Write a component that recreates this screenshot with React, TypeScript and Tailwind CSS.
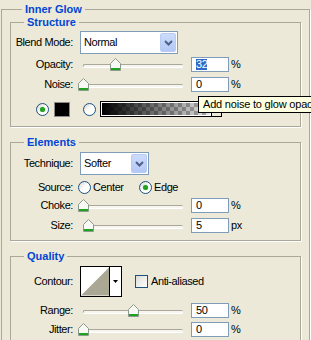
import React from "react";

// etched XP-style group box
const Group = ({ title, className, children }: { title: string; className?: string; children: React.ReactNode }) => (
  <fieldset
    className={`border border-[#aca899] shadow-[1px_1px_0_#fff] ${className ?? ""}`}
  >
    <legend className="ml-[13px] px-[3px] leading-[14px] font-bold text-[#0046d5] tracking-normal">
      {title}
    </legend>
    {children}
  </fieldset>
);

const Label = ({ children }: { children: React.ReactNode }) => (
  <span className="w-[62px] text-right whitespace-nowrap">{children}</span>
);

const Slider = ({ value }: { value: number }) => (
  <div className="relative w-[106px] h-[15px]">
    <div className="absolute left-[3px] top-[7px] w-[100px] h-[3px] rounded-full border-t border-l border-[#aca899] bg-[#f6f5f0] shadow-[0_1px_0_#fff]" />
    <svg
      className="absolute top-[1px]"
      style={{ left: 3 + value - 5 }}
      width="11"
      height="13"
      viewBox="0 0 11 13"
    >
      <path d="M0.5 5.5 L5.5 0.5 L10.5 5.5 V12.5 H0.5 Z" fill="#f8f8f5" stroke="#8a9a8c" />
      <rect x="1" y="10" width="9" height="2" fill="#21a121" />
    </svg>
  </div>
);

const NumInput = ({ value, selected }: { value: string; selected?: boolean }) => (
  <div className="ml-[5px] w-[38px] h-[15px] border border-[#7f9db9] bg-white flex items-center pl-[4px]">
    {selected ? <span className="bg-[#316ac5] text-white leading-[11px]">{value}</span> : value}
  </div>
);

const SliderRow = ({
  label,
  value,
  text,
  unit,
  selected,
  className,
}: {
  label: string;
  value: number;
  text: string;
  unit: string;
  selected?: boolean;
  className?: string;
}) => (
  <div className={`flex items-center h-[15px] ${className ?? ""}`}>
    <Label>{label}</Label>
    <div className="ml-[7px]">
      <Slider value={value} />
    </div>
    <NumInput value={text} selected={selected} />
    <span className="ml-[2px]">{unit}</span>
  </div>
);

const Radio = ({ checked, className }: { checked?: boolean; className?: string }) => (
  <div
    className={`w-[13px] h-[13px] rounded-full border border-[#1c5180] bg-gradient-to-br from-[#d6d5ce] via-white to-white flex items-center justify-center shrink-0 ${className ?? ""}`}
  >
    {checked && <div className="w-[5px] h-[5px] rounded-full bg-[#21a121] shadow-[0_0_1px_#5fd35f]" />}
  </div>
);

const Dropdown = ({ text, width }: { text: string; width: string }) => (
  <div className={`ml-[7px] ${width} h-[23px] border border-[#7f9db9] bg-white flex items-center`}>
    <span className="flex-1 pl-[3px]">{text}</span>
    <div className="w-[16px] h-[19px] mr-[1px] rounded-[2px] border border-[#b9cbf5] bg-gradient-to-b from-[#cddcfc] to-[#b4c8f6] flex items-center justify-center">
      <svg width="9" height="6" viewBox="0 0 9 6">
        <path d="M1 1 L4.5 4.5 L8 1" fill="none" stroke="#4d6185" strokeWidth="2" />
      </svg>
    </div>
  </div>
);

export default function App() {
  return (
    <div className="relative w-[311px] h-[340px] overflow-hidden bg-[#ece9d8] text-black text-[11px] leading-[13px] tracking-[-0.4px] font-['Liberation_Sans',Arial,sans-serif]">
      <fieldset className="ml-[1px] mt-[3px] w-[309px] pl-[8px] border border-[#aca899] shadow-[1px_1px_0_#fff]">
        <legend className="ml-[12px] px-[3px] leading-[12px] font-bold text-[#0046d5] tracking-normal">
          Inner Glow
        </legend>

        <Group title="Structure" className="w-[291px] pb-[9px]">
          <div className="flex items-center h-[23px] mt-[2px]">
            <Label>Blend Mode:</Label>
            <Dropdown text="Normal" width="w-[98px]" />
          </div>
          <SliderRow label="Opacity:" value={32} text="32" unit="%" selected className="mt-[3px]" />
          <SliderRow label="Noise:" value={0} text="0" unit="%" className="mt-[5px]" />
          <div className="flex items-center h-[16px] mt-[9px]">
            <Radio checked className="ml-[25px]" />
            <div className="ml-[5px] w-[16px] h-[15px] border border-[#8c8c8c] bg-black" />
            <Radio className="ml-[13px]" />
            <div className="ml-[4px] w-[112px] h-[16px] border border-black bg-white p-[1px]">
              <div className="w-full h-full bg-[conic-gradient(#a9a9a9_25%,#e6e6e6_0_50%,#a9a9a9_0_75%,#e6e6e6_0)] bg-[length:8px_8px]">
                <div className="w-full h-full bg-gradient-to-r from-black to-transparent" />
              </div>
            </div>
            <div className="w-[10px] h-[16px] border border-l-0 border-black bg-[#ece9d8]" />
          </div>
        </Group>

        <Group title="Elements" className="w-[291px] mt-[8px] pb-[7px]">
          <div className="flex items-center h-[23px] mt-[3px]">
            <Label>Technique:</Label>
            <Dropdown text="Softer" width="w-[69px]" />
          </div>
          <div className="flex items-center h-[13px] mt-[6px]">
            <Label>Source:</Label>
            <Radio className="ml-[5px]" />
            <span className="ml-[2px] w-[46px]">Center</span>
            <Radio checked />
            <span className="ml-[2px]">Edge</span>
          </div>
          <SliderRow label="Choke:" value={0} text="0" unit="%" className="mt-[4px]" />
          <SliderRow label="Size:" value={5} text="5" unit="px" className="mt-[5px]" />
        </Group>

        <Group title="Quality" className="w-[291px] mt-[8px] pb-[10px]">
          <div className="flex items-center h-[31px] mt-[3px]">
            <Label>Contour:</Label>
            <div className="ml-[7px] w-[42px] h-[31px] border border-black bg-white flex">
              <svg width="29" height="29" viewBox="0 0 29 29" className="border-r border-black">
                <polygon points="0,29 29,0 29,29" fill="#aba795" />
              </svg>
              <div className="flex-1 flex items-center justify-center">
                <svg width="5" height="3" viewBox="0 0 5 3">
                  <polygon points="0,0 5,0 2.5,3" fill="#000" />
                </svg>
              </div>
            </div>
            <div className="ml-[13px] w-[13px] h-[13px] border border-[#1c5180] bg-gradient-to-br from-[#dcdcd6] to-white" />
            <span className="ml-[3px]">Anti-aliased</span>
          </div>
          <SliderRow label="Range:" value={50} text="50" unit="%" className="mt-[6px]" />
          <SliderRow label="Jitter:" value={0} text="0" unit="%" className="mt-[4px]" />
        </Group>
      </fieldset>

      <div className="absolute left-[198px] top-[96px] h-[17px] border border-black bg-[#ffffe1] pl-[4px] pr-[4px] flex items-center whitespace-nowrap text-[11px] tracking-[-0.2px]">
        Add noise to glow opacity
      </div>
    </div>
  );
}
